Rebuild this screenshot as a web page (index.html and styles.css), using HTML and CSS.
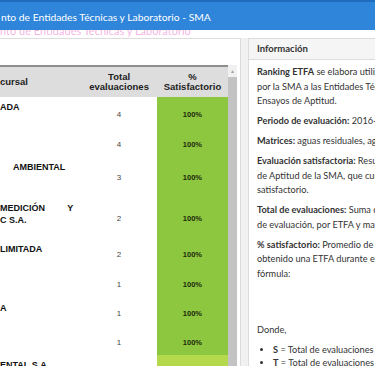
FILE: index.html
```html
<!DOCTYPE html>
<html lang="es">
<head>
    <meta charset="UTF-8">
    <meta name="viewport" content="width=device-width, initial-scale=1.0">
    <title>Ranking ETFA - SMA</title>
    <link rel="stylesheet" href="styles.css">
</head>
<body>

    <div class="topbar">
        <h1 class="titulo">nto de Entidades Técnicas y Laboratorio - SMA</h1>
    </div>
    <div class="ghost"><span>nto de Entidades Técnicas y Laboratorio</span></div>

    <div class="main">
        <div class="panel tabla-panel">
            <div class="tabla-scroll">
                <table class="ranking">
                    <thead>
                        <tr>
                            <th class="c-nombre">cursal</th>
                            <th class="c-total">Total<br>evaluaciones</th>
                            <th class="c-pct">%<br>Satisfactorio</th>
                        </tr>
                    </thead>
                    <tbody>
                        <tr class="h35">
                            <td class="c-nombre">ADA</td>
                            <td class="c-total">4</td>
                            <td class="c-pct">100%</td>
                        </tr>
                        <tr class="h25">
                            <td class="c-nombre"></td>
                            <td class="c-total">4</td>
                            <td class="c-pct">100%</td>
                        </tr>
                        <tr class="h41">
                            <td class="c-nombre"><span class="sangria">AMBIENTAL</span></td>
                            <td class="c-total">3</td>
                            <td class="c-pct">100%</td>
                        </tr>
                        <tr class="h41">
                            <td class="c-nombre"><span class="just">MEDICIÓN Y</span>C S.A.</td>
                            <td class="c-total">2</td>
                            <td class="c-pct">100%</td>
                        </tr>
                        <tr class="h31">
                            <td class="c-nombre">LIMITADA</td>
                            <td class="c-total">2</td>
                            <td class="c-pct">100%</td>
                        </tr>
                        <tr class="h28">
                            <td class="c-nombre"></td>
                            <td class="c-total">1</td>
                            <td class="c-pct">100%</td>
                        </tr>
                        <tr class="h31">
                            <td class="c-nombre">A</td>
                            <td class="c-total">1</td>
                            <td class="c-pct">100%</td>
                        </tr>
                        <tr class="h26">
                            <td class="c-nombre"></td>
                            <td class="c-total">1</td>
                            <td class="c-pct">100%</td>
                        </tr>
                        <tr class="h31">
                            <td class="c-nombre">ENTAL S.A.</td>
                            <td class="c-total">1</td>
                            <td class="c-pct medio">88%</td>
                        </tr>
                    </tbody>
                </table>
                <div class="scrollbar">
                    <div class="flecha">▲</div>
                    <div class="thumb"></div>
                </div>
            </div>
        </div>

        <div class="panel info-panel">
            <div class="info-header">Información</div>
            <div class="info-body">
                <p><b>Ranking ETFA</b> se elabora utilizando los resultados de los Ensayos de Aptitud aplicados<br>
                por la SMA a las Entidades Técnicas de Fiscalización Ambiental que participaron en los<br>
                Ensayos de Aptitud.</p>
                <p><b>Periodo de evaluación:</b> 2016-2019.</p>
                <p><b>Matrices:</b> aguas residuales, agua potable y suelos.</p>
                <p><b>Evaluación satisfactoria:</b> Resultado obtenido por una ETFA en un Ensayo<br>
                de Aptitud de la SMA, que cumple con el criterio de desempeño<br>
                satisfactorio.</p>
                <p><b>Total de evaluaciones:</b> Suma del número de Ensayos de Aptitud en el periodo<br>
                de evaluación, por ETFA y matriz.</p>
                <p><b>% satisfactorio:</b> Promedio de evaluaciones satisfactorias que ha<br>
                obtenido una ETFA durante el periodo de evaluación, según la siguiente<br>
                fórmula:</p>
                <div class="formula"></div>
                <p>Donde,</p>
                <ul>
                    <li><b>S</b> = Total de evaluaciones satisfactorias</li>
                    <li><b>T</b> = Total de evaluaciones</li>
                </ul>
            </div>
        </div>
    </div>

</body>
</html>
```

FILE: styles.css
```css
body {
    margin: 0;
    font-family: Lato, "Liberation Sans", sans-serif;
    background: #f1f1f1;
    color: #333;
    height: 366px;
    overflow: hidden;
}

.topbar {
    background: #2f85da;
    border-top: 2px solid #1f6cbf;
    height: 28px;
    color: white;
}

.titulo {
    margin: 0;
    padding: 2px 0 0 1px;
    font-size: 10.3px;
    font-weight: normal;
    line-height: 26px;
    white-space: nowrap;
}

.ghost {
    height: 8px;
    overflow: hidden;
    background: white;
}

.ghost span {
    display: block;
    margin-top: -5px;
    font-size: 11px;
    line-height: 12px;
    color: rgba(232, 80, 190, 0.45);
    white-space: nowrap;
}

.main {
    display: flex;
    align-items: flex-start;
    gap: 7px;
    margin-left: -1px;
    width: 700px;
}

.panel {
    background: white;
    border: 1px solid #dcdcdc;
}

.tabla-panel {
    padding: 26px 3px 0 0;
}

.tabla-scroll {
    display: flex;
    align-items: stretch;
    height: 400px;
    overflow: hidden;
}

.ranking {
    width: 228px;
    border-collapse: collapse;
    font-family: "Liberation Sans", Arial, sans-serif;
    align-self: flex-start;
}

.ranking th {
    background: #dddddd;
    border-top: 2px solid #8e8e8e;
    height: 30px;
    padding: 0;
    font-size: 9.5px;
    line-height: 10.5px;
    color: #222;
    vertical-align: middle;
}

.ranking td {
    padding: 0;
}

.c-nombre {
    width: 75px;
    text-align: left;
}

.c-total {
    width: 79px;
    text-align: center;
}

.c-pct {
    width: 74px;
    text-align: center;
}

td.c-nombre {
    vertical-align: top;
    padding: 3.5px 8px 0 0;
    font-size: 9px;
    line-height: 12px;
    font-weight: bold;
    color: #111;
}

td.c-total {
    font-size: 8px;
    color: #444;
}

td.c-pct {
    background: #8dc63f;
    font-size: 7.5px;
    font-weight: bold;
    color: #1d2a0c;
}

td.medio {
    background: #b4d94c;
}

.sangria {
    padding-left: 13px;
}

.just {
    display: block;
    text-align: justify;
    text-align-last: justify;
}

.h25 { height: 25px; }
.h26 { height: 26px; }
.h28 { height: 28px; }
.h31 { height: 31px; }
.h35 { height: 35px; }
.h41 { height: 41px; }

.scrollbar {
    width: 9px;
    background: #f1f1f1;
    display: flex;
    flex-direction: column;
}

.flecha {
    height: 12px;
    font-size: 5px;
    line-height: 12px;
    text-align: center;
    color: #a3a3a3;
}

.thumb {
    flex: 1;
    background: #c3c3c3;
}

.info-panel {
    width: 420px;
}

.info-header {
    background: #f5f5f5;
    border-bottom: 1px solid #dcdcdc;
    padding: 0 8px;
    line-height: 20px;
    font-size: 9.5px;
    font-weight: bold;
    color: #333;
}

.info-body {
    padding: 5px 8px;
    font-size: 9.2px;
    line-height: 14.5px;
}

.info-body p {
    margin: 0 0 5.5px;
    white-space: nowrap;
}

.formula {
    height: 30px;
    margin-bottom: 6px;
}

.info-body ul {
    margin: 0;
    padding-left: 16px;
    line-height: 13px;
}
```
